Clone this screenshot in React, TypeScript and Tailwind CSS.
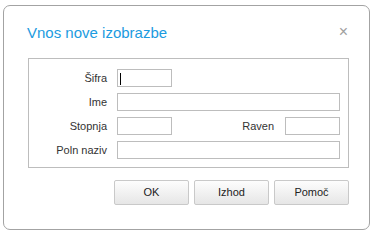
import React from "react";

const font = { fontFamily: "'Liberation Sans', Arial, sans-serif" };

function Input({ w, cursor }: { w: string; cursor?: boolean }) {
  return (
    <div className={`h-[18px] border border-[#bdbdbd] bg-white relative ${w}`}>
      {cursor && <div className="absolute left-[2px] top-[3px] w-px h-[12px] bg-black" />}
    </div>
  );
}

function Btn({ label }: { label: string }) {
  return (
    <div className="w-[75px] h-[25px] border border-[#c9c9c9] rounded-[2px] bg-gradient-to-b from-[#fdfdfd] to-[#e6e6e6] flex items-center justify-center text-[11px] text-[#222]">
      {label}
    </div>
  );
}

function Label({ text }: { text: string }) {
  return <span className="w-[88px] shrink-0 pr-[10px] text-right">{text}</span>;
}

export default function App() {
  return (
    <div className="w-[374px] h-[232px] bg-white pt-[5px] pl-[3px]" style={font}>
      <div className="w-[367px] h-[225px] border border-[#a3a3a3] rounded-[7px] flex flex-col">
        <div className="flex items-start justify-between h-[52px]">
          <div className="pl-[23px] pt-[17px] text-[15px] leading-[20px] text-[#1b9be0]">Vnos nove izobrazbe</div>
          <div className="pr-[21px] pt-[17px] text-[16px] leading-[18px] text-[#a0a0a0]">×</div>
        </div>
        <div className="ml-[24px] w-[321px] h-[110px] border border-[#bdbdbd] pt-[10px] pr-[8px] flex flex-col gap-[6px] text-[11px] text-[#333]">
          <div className="flex items-center h-[18px]">
            <Label text="Šifra" />
            <Input w="w-[55px]" cursor />
          </div>
          <div className="flex items-center h-[18px]">
            <Label text="Ime" />
            <Input w="flex-1" />
          </div>
          <div className="flex items-center h-[18px]">
            <Label text="Stopnja" />
            <Input w="w-[55px]" />
            <span className="flex-1 text-right pr-[11px]">Raven</span>
            <Input w="w-[55px]" />
          </div>
          <div className="flex items-center h-[18px]">
            <Label text="Poln naziv" />
            <Input w="flex-1" />
          </div>
        </div>
        <div className="flex gap-[5px] pl-[110px] pt-[12px]">
          <Btn label="OK" />
          <Btn label="Izhod" />
          <Btn label="Pomoč" />
        </div>
      </div>
    </div>
  );
}
